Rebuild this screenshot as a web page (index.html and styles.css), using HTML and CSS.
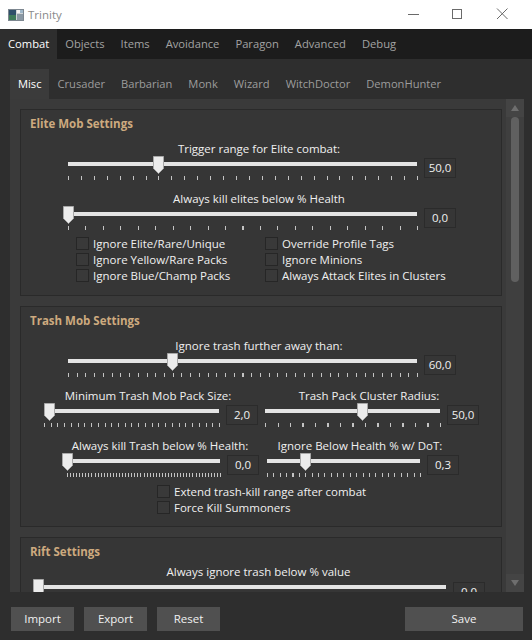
FILE: index.html
```html
<!DOCTYPE html>
<html>
<head>
<meta charset="utf-8">
<title>Trinity</title>
<link rel="stylesheet" href="styles.css">
</head>
<body>
<div class="window">
  <header class="titlebar">
    <svg class="app-icon" width="16" height="12" viewBox="0 0 16 12">
      <rect x="0.5" y="0.5" width="15" height="11" fill="#cfd3d6" stroke="#7d8790"/>
      <rect x="1" y="1" width="7" height="10" fill="#2f4f6a"/>
      <rect x="1" y="6" width="7" height="5" fill="#3e7a5a"/>
      <rect x="9" y="1" width="3" height="3" fill="#f4f4f4"/>
      <rect x="12" y="1" width="3" height="3" fill="#9fb7c9"/>
      <rect x="9" y="5" width="6" height="6" fill="#8a98a4"/>
    </svg>
    <span class="title">Trinity</span>
    <svg class="win-controls" width="124" height="29" viewBox="0 0 124 29">
      <line x1="0" y1="14.5" x2="11" y2="14.5" stroke="#6a6a6a"/>
      <rect x="44.5" y="9.5" width="9" height="9" fill="none" stroke="#6a6a6a"/>
      <line x1="89" y1="8.5" x2="99.5" y2="19" stroke="#6a6a6a"/>
      <line x1="99.5" y1="8.5" x2="89" y2="19" stroke="#6a6a6a"/>
    </svg>
  </header>

  <nav class="tabs">
    <span class="tab active">Combat</span>
    <span class="tab">Objects</span>
    <span class="tab">Items</span>
    <span class="tab">Avoidance</span>
    <span class="tab">Paragon</span>
    <span class="tab">Advanced</span>
    <span class="tab">Debug</span>
  </nav>

  <main class="main">
    <nav class="subtabs">
      <span class="subtab active">Misc</span>
      <span class="subtab">Crusader</span>
      <span class="subtab">Barbarian</span>
      <span class="subtab">Monk</span>
      <span class="subtab">Wizard</span>
      <span class="subtab">WitchDoctor</span>
      <span class="subtab">DemonHunter</span>
    </nav>

    <div class="panel">
      <div class="scroll">
        <section class="group elite">
          <div class="group-title">Elite Mob Settings</div>

          <div class="sblock wide first">
            <div class="slabel">Trigger range for Elite combat:</div>
            <div class="srow">
              <div class="slider" style="--p:0.26;--n:27">
                <div class="track"></div><div class="ticks"></div>
                <svg class="thumb" width="11" height="18" viewBox="0 0 11 18"><path d="M0.5 0.5H10.5V12.5L5.5 17.5L0.5 12.5Z" fill="#ececec" stroke="#a8a8a8"/></svg>
              </div>
              <div class="value">50,0</div>
            </div>
          </div>

          <div class="sblock wide next">
            <div class="slabel">Always kill elites below % Health</div>
            <div class="srow">
              <div class="slider" style="--p:0;--n:20">
                <div class="track"></div><div class="ticks"></div>
                <svg class="thumb" width="11" height="18" viewBox="0 0 11 18"><path d="M0.5 0.5H10.5V12.5L5.5 17.5L0.5 12.5Z" fill="#ececec" stroke="#a8a8a8"/></svg>
              </div>
              <div class="value">0,0</div>
            </div>
          </div>

          <div class="checks elite-checks">
            <label class="cb"><span class="box"></span>Ignore Elite/Rare/Unique</label>
            <label class="cb"><span class="box"></span>Override Profile Tags</label>
            <label class="cb"><span class="box"></span>Ignore Yellow/Rare Packs</label>
            <label class="cb"><span class="box"></span>Ignore Minions</label>
            <label class="cb"><span class="box"></span>Ignore Blue/Champ Packs</label>
            <label class="cb"><span class="box"></span>Always Attack Elites in Clusters</label>
          </div>
        </section>

        <section class="group trash">
          <div class="group-title">Trash Mob Settings</div>

          <div class="sblock wide first">
            <div class="slabel">Ignore trash further away than:</div>
            <div class="srow">
              <div class="slider" style="--p:0.30;--n:40">
                <div class="track"></div><div class="ticks"></div>
                <svg class="thumb" width="11" height="18" viewBox="0 0 11 18"><path d="M0.5 0.5H10.5V12.5L5.5 17.5L0.5 12.5Z" fill="#ececec" stroke="#a8a8a8"/></svg>
              </div>
              <div class="value">60,0</div>
            </div>
          </div>

          <div class="pair pair-a">
            <div class="sblock">
              <div class="slabel">Minimum Trash Mob Pack Size:</div>
              <div class="srow">
                <div class="slider" style="--p:0.032;--n:26">
                  <div class="track"></div><div class="ticks"></div>
                  <svg class="thumb" width="11" height="18" viewBox="0 0 11 18"><path d="M0.5 0.5H10.5V12.5L5.5 17.5L0.5 12.5Z" fill="#ececec" stroke="#a8a8a8"/></svg>
                </div>
                <div class="value">2,0</div>
              </div>
            </div>
            <div class="sblock">
              <div class="slabel">Trash Pack Cluster Radius:</div>
              <div class="srow">
                <div class="slider" style="--p:0.557;--n:14">
                  <div class="track"></div><div class="ticks"></div>
                  <svg class="thumb" width="11" height="18" viewBox="0 0 11 18"><path d="M0.5 0.5H10.5V12.5L5.5 17.5L0.5 12.5Z" fill="#ececec" stroke="#a8a8a8"/></svg>
                </div>
                <div class="value">50,0</div>
              </div>
            </div>
          </div>

          <div class="pair pair-b">
            <div class="sblock">
              <div class="slabel">Always kill Trash below % Health:</div>
              <div class="srow">
                <div class="slider" style="--p:0;--n:50">
                  <div class="track"></div><div class="ticks"></div>
                  <svg class="thumb" width="11" height="18" viewBox="0 0 11 18"><path d="M0.5 0.5H10.5V12.5L5.5 17.5L0.5 12.5Z" fill="#ececec" stroke="#a8a8a8"/></svg>
                </div>
                <div class="value">0,0</div>
              </div>
            </div>
            <div class="sblock">
              <div class="slabel">Ignore Below Health % w/ DoT:</div>
              <div class="srow">
                <div class="slider" style="--p:0.252;--n:24">
                  <div class="track"></div><div class="ticks"></div>
                  <svg class="thumb" width="11" height="18" viewBox="0 0 11 18"><path d="M0.5 0.5H10.5V12.5L5.5 17.5L0.5 12.5Z" fill="#ececec" stroke="#a8a8a8"/></svg>
                </div>
                <div class="value">0,3</div>
              </div>
            </div>
          </div>

          <div class="checks trash-checks">
            <label class="cb"><span class="box"></span>Extend trash-kill range after combat</label>
            <label class="cb"><span class="box"></span>Force Kill Summoners</label>
          </div>
        </section>

        <section class="group rift">
          <div class="group-title">Rift Settings</div>
          <div class="sblock riftw">
            <div class="slabel">Always ignore trash below % value</div>
            <div class="srow">
              <div class="slider" style="--p:0;--n:20">
                <div class="track"></div><div class="ticks"></div>
                <svg class="thumb" width="11" height="18" viewBox="0 0 11 18"><path d="M0.5 0.5H10.5V12.5L5.5 17.5L0.5 12.5Z" fill="#ececec" stroke="#a8a8a8"/></svg>
              </div>
              <div class="value rift-value">0,0</div>
            </div>
          </div>
        </section>
      </div>

      <div class="scrollbar">
        <div class="sb-btn"><svg width="8" height="6" viewBox="0 0 8 6"><path d="M4 0L8 6H0Z" fill="#6e6e6e"/></svg></div>
        <div class="sb-track"><div class="sb-thumb"></div></div>
        <div class="sb-btn"><svg width="8" height="6" viewBox="0 0 8 6"><path d="M0 0H8L4 6Z" fill="#6e6e6e"/></svg></div>
      </div>
    </div>

    <footer class="footer">
      <button class="btn">Import</button>
      <button class="btn">Export</button>
      <button class="btn">Reset</button>
      <button class="btn save">Save</button>
    </footer>
  </main>
</div>
</body>
</html>
```

FILE: styles.css
```css
* { box-sizing: border-box; }
html, body { margin: 0; padding: 0; }
body {
  width: 532px;
  height: 640px;
  overflow: hidden;
  background: #2e2e2e;
  color: #f0f0f0;
  font-family: "Open Sans", "Noto Sans", sans-serif;
  font-size: 11.5px;
}
.window { display: flex; flex-direction: column; height: 640px; }

/* title bar */
.titlebar {
  flex: none;
  height: 29px;
  background: #ffffff;
  display: flex;
  align-items: center;
}
.app-icon { margin-left: 8px; margin-top: 1px; }
.title { margin-left: 4px; color: #8a8a8a; font-size: 11.5px; }
.win-controls { margin-left: auto; display: block; }

/* top tabs */
.tabs {
  flex: none;
  height: 30px;
  background: #1c1c1c;
  display: flex;
}
.tab { padding: 0 8px; line-height: 30px; color: #a3a3a3; white-space: nowrap; font-size: 11.2px; }
.tab.active { background: #2e2e2e; color: #ffffff; }

/* main */
.main {
  flex: 1;
  min-height: 0;
  display: flex;
  flex-direction: column;
  padding-top: 10px;
}
.subtabs { flex: none; height: 30px; display: flex; margin-left: 10px; }
.subtab { padding: 0 8px; line-height: 30px; color: #9d9d9d; white-space: nowrap; font-size: 11.15px; }
.subtab.active { background: #3b3b3b; color: #ffffff; }

.panel {
  flex: none;
  height: 493px;
  margin: 0 8px 0 10px;
  background: #3a3a3a;
  display: flex;
  overflow: hidden;
}
.scroll { flex: none; width: 492px; padding: 10px 0 0 10px; }

/* group boxes */
.group {
  background: #363636;
  border: 1px solid #2a2a2a;
  margin-bottom: 10px;
}
.elite { padding-bottom: 12px; }
.trash { padding-bottom: 11px; }
.group-title {
  margin: 6px 0 0 9px;
  line-height: 16px;
  font-weight: 700;
  color: #cdaa7f;
}

/* slider blocks */
.sblock { display: flex; flex-direction: column; }
.slabel { text-align: center; line-height: 15px; height: 15px; white-space: nowrap; }
.srow { display: flex; align-items: flex-start; }
.slider { position: relative; flex: 1; height: 25px; }
.track {
  position: absolute;
  left: 6px; right: 5px; top: 6px;
  height: 4px;
  background: #e4e4e4;
}
.ticks {
  position: absolute;
  left: 6px; right: 4px; top: 20px;
  height: 4px;
  background: repeating-linear-gradient(90deg, #c4c4c4 0 1px, transparent 1px calc((100% - 1px) / var(--n)));
}
.thumb {
  position: absolute;
  top: 0;
  left: calc(0.5px + var(--p) * (100% - 11px));
  display: block;
}
.value {
  flex: none;
  width: 32px;
  height: 20px;
  margin: 2px 0 0 2px;
  border: 1px solid #2b2b2b;
  text-align: center;
  line-height: 18px;
}

.wide { margin-left: 41px; width: 394px; }
.elite .first { margin-top: 9px; }
.trash .first { margin-top: 9px; }
.next { margin-top: 10px; }

.pair { display: flex; }
.pair-a { margin: 10px 0 0 17px; gap: 1px; }
.pair-a .sblock { width: 220px; }
.pair-b { margin: 10px 0 0 40px; gap: 2px; }
.pair-b .sblock { width: 198px; }

.riftw { margin: 4px 0 0 11px; width: 453px; }
.rift-value { margin-top: 3px; }

/* checkboxes */
.checks { display: grid; }
.elite-checks { margin: 4px 0 0 55px; grid-template-columns: 189px auto; }
.trash-checks { margin: 5px 0 0 136px; }
.cb { display: flex; align-items: center; height: 16px; white-space: nowrap; }
.box {
  width: 13px;
  height: 13px;
  border: 1px solid #262626;
  background: #393939;
  margin-right: 4px;
  flex: none;
}

/* scrollbar */
.scrollbar {
  flex: none;
  width: 18px;
  margin-left: 4px;
  display: flex;
  flex-direction: column;
  background: #3f3f3f;
}
.sb-btn {
  flex: none;
  height: 18px;
  background: #444444;
  display: flex;
  align-items: center;
  justify-content: center;
}
.sb-btn svg { display: block; }
.sb-track { flex: 1; }
.sb-thumb {
  width: 8px;
  height: 165px;
  margin: 0 auto;
  background: #606060;
  border-radius: 4px;
}

/* footer */
.footer {
  flex: 1;
  display: flex;
  align-items: flex-start;
  gap: 10px;
  padding: 15px 9px 0 11px;
}
.btn {
  width: 63px;
  height: 24px;
  padding: 0;
  border: none;
  background: #505050;
  color: #f0f0f0;
  font-family: inherit;
  font-size: 11.5px;
  line-height: 24px;
  text-align: center;
}
.btn.save { width: 118px; margin-left: auto; }
```
